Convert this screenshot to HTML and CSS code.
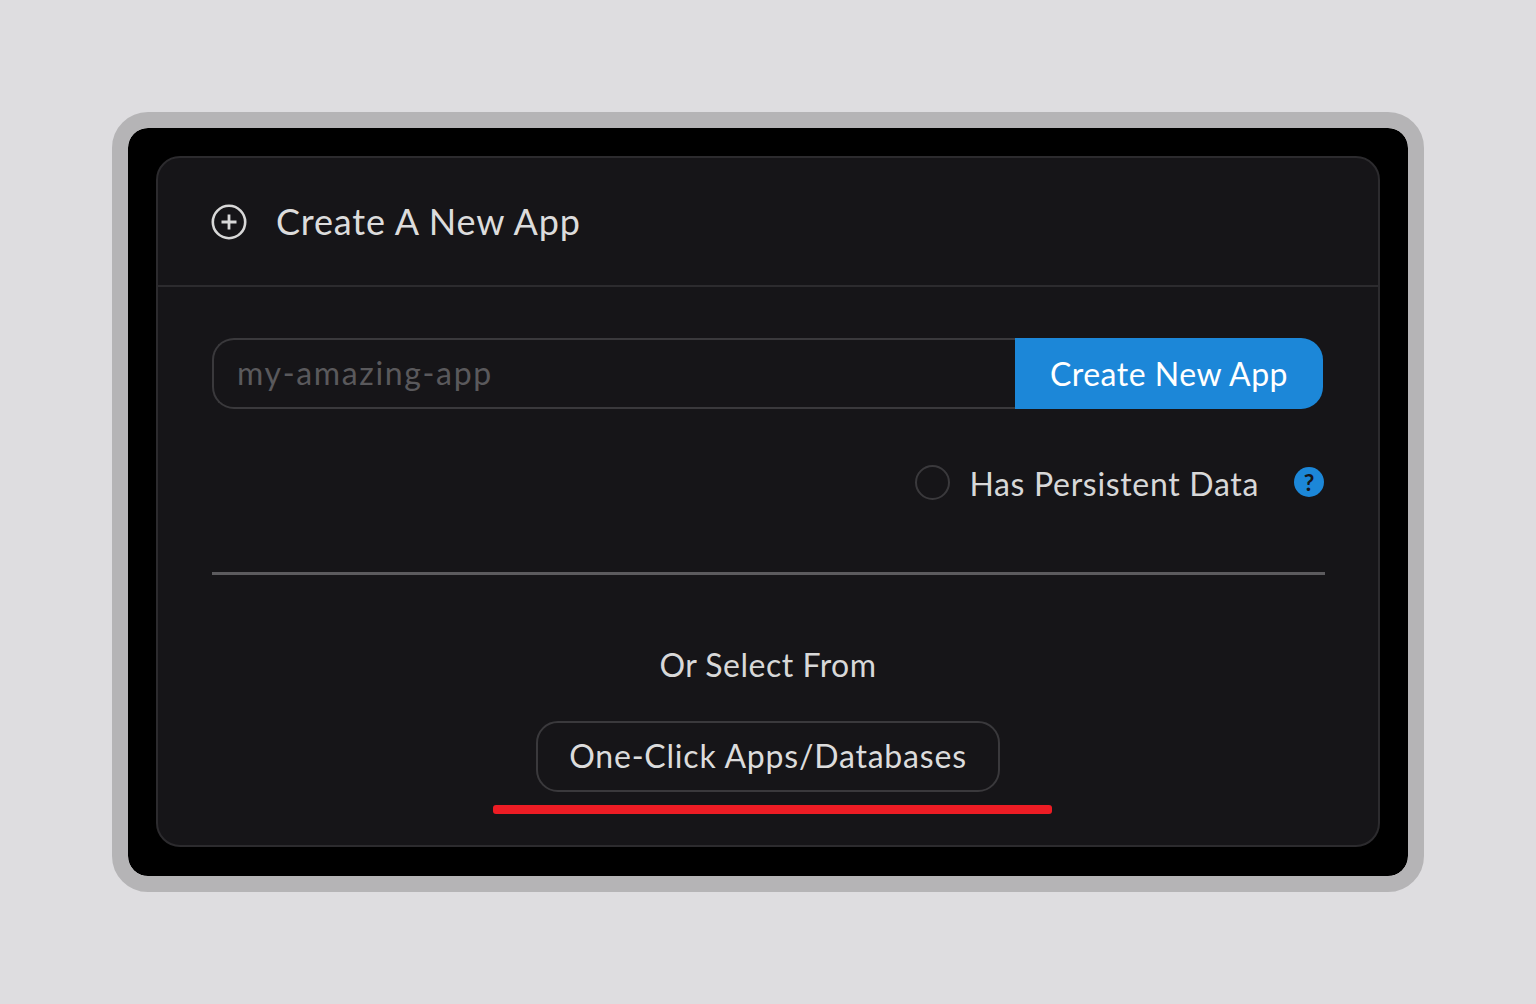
FILE: index.html
```html
<!DOCTYPE html>
<html lang="en">
<head>
<meta charset="utf-8">
<title>Create A New App</title>
<link rel="stylesheet" href="styles.css">
</head>
<body>
<div class="frame">
  <section class="card">
    <header class="card-head">
      <svg class="plus-icon" viewBox="0 0 36 36" width="36" height="36" fill="none" stroke="#d8d8d8" aria-hidden="true">
        <circle cx="18" cy="18" r="16.2" stroke-width="2.6"/>
        <path d="M18 10.5v15M10.5 18h15" stroke-width="2.8"/>
      </svg>
      <h1 class="card-title">Create A New App</h1>
    </header>
    <div class="card-body">
      <div class="new-app">
        <div class="app-input">my-amazing-app</div>
        <button class="app-btn">Create New App</button>
      </div>
      <div class="options">
        <span class="radio"></span>
        <span class="opt-label">Has Persistent Data</span>
        <span class="help">?</span>
      </div>
      <hr class="rule">
      <p class="or-select">Or Select From</p>
      <div class="one-click-row">
        <button class="one-click">One-Click Apps/Databases</button>
        <span class="underline"></span>
      </div>
    </div>
  </section>
</div>
</body>
</html>
```
FILE: styles.css
```css
* { box-sizing: border-box; }
html, body { margin: 0; height: 100%; }
body {
  background: #dedde0;
  padding: 112px;
  font-family: "Lato", "Open Sans", sans-serif;
}
.frame {
  height: 780px;
  background: #000;
  border: 16px solid #b5b4b6;
  border-radius: 36px;
  padding: 28px 28px 29px;
  background-clip: padding-box;
}
.card {
  height: 691px;
  background: #161518;
  border: 2px solid #2c2b2e;
  border-radius: 24px;
}
.card-head {
  height: 129px;
  display: flex;
  align-items: center;
  gap: 29px;
  padding: 0 0 0 53px;
  border-bottom: 2px solid #2c2b2e;
}
.plus-icon { flex: none; }
.card-title {
  margin: 0 0 1px;
  font-size: 36px;
  font-weight: 400;
  letter-spacing: 0.85px;
  color: #dcdcdc;
  line-height: 44px;
}
.card-body { padding: 51px 54px 0; position: relative; }
.new-app { display: flex; height: 71px; width: 1111px; }
.app-input {
  flex: 1;
  border: 2px solid #3a393c;
  border-right: 0;
  border-radius: 22px 0 0 22px;
  padding: 0 0 2px 23px;
  display: flex;
  align-items: center;
  font-size: 32px;
  letter-spacing: 1.65px;
  color: #5a595c;
}
.app-btn {
  width: 308px;
  border: 0;
  background: #1c87d8;
  color: #fff;
  font: inherit;
  font-size: 32px;
  letter-spacing: 0.5px;
  border-radius: 0 22px 22px 0;
  padding: 0 0 1px;
}
.options {
  display: flex;
  align-items: center;
  justify-content: flex-end;
  height: 36px;
  margin-top: 55px;
  width: 1112px;
}
.radio {
  width: 35px;
  height: 35px;
  border: 2px solid #3a393c;
  border-radius: 50%;
}
.opt-label {
  margin-left: 19px;
  font-size: 32px;
  letter-spacing: 0.68px;
  color: #d8d8d8;
  position: relative;
  top: 1px;
}
.help {
  width: 30px;
  height: 30px;
  margin-left: 35px;
  border-radius: 50%;
  background: #1c87d8;
  color: #161518;
  font-size: 23px;
  font-weight: 700;
  line-height: 30px;
  text-align: center;
}
.rule {
  width: 1113px;
  height: 3px;
  margin: 72px 0 0;
  border: 0;
  background: #5c5b5e;
}
.or-select {
  margin: 70px 0 0;
  width: 1112px;
  text-align: center;
  font-size: 32px;
  letter-spacing: 0.5px;
  line-height: 40px;
  color: #d8d8d8;
}
.one-click-row {
  position: relative;
  display: flex;
  justify-content: center;
  width: 1112px;
  margin-top: 36px;
}
.one-click {
  width: 464px;
  height: 71px;
  background: transparent;
  border: 2px solid #3a393c;
  border-radius: 22px;
  color: #dcdcdc;
  font: inherit;
  font-size: 32px;
  letter-spacing: 0.8px;
  padding: 0 0 2px;
}
.underline {
  position: absolute;
  left: 281px;
  top: 84px;
  width: 559px;
  height: 9px;
  background: #ed1c24;
  border-radius: 3px;
}
```
